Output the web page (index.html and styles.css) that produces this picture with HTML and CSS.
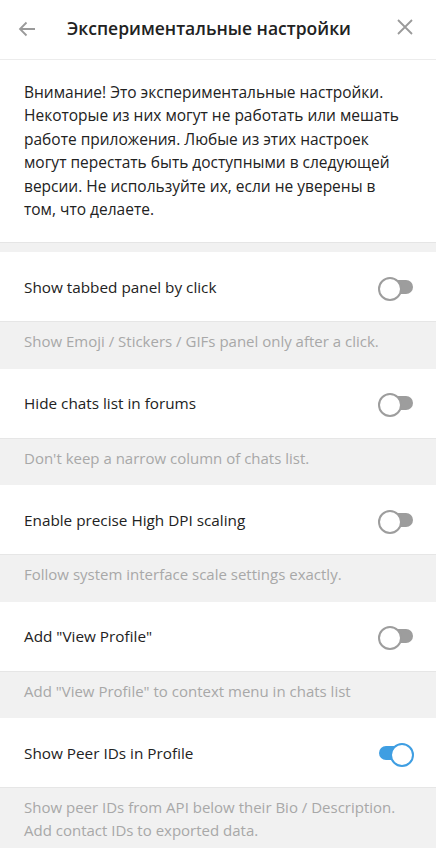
FILE: index.html
```html
<!DOCTYPE html>
<html lang="ru">
<head>
<meta charset="utf-8">
<link rel="stylesheet" href="styles.css">
</head>
<body>
<div class="app">
  <header class="header">
    <button class="icon-btn back" aria-label="Назад">
      <svg width="22" height="22" viewBox="0 0 22 22"><path d="M19 11H4M10.5 4.5L4 11l6.5 6.5" fill="none" stroke="#9a9a9a" stroke-width="1.8"/></svg>
    </button>
    <h1 class="title">Экспериментальные настройки</h1>
    <button class="icon-btn close" aria-label="Закрыть">
      <svg width="20" height="20" viewBox="0 0 20 20"><path d="M3 3L17 17M17 3L3 17" fill="none" stroke="#9a9a9a" stroke-width="1.8"/></svg>
    </button>
  </header>
  <div class="warning">Внимание! Это экспериментальные настройки. Некоторые из них могут не работать или мешать работе приложения. Любые из этих настроек могут перестать быть доступными в следующей версии. Не используйте их, если не уверены в том, что делаете.</div>
  <div class="gap"></div>

  <div class="row"><span class="label">Show tabbed panel by click</span><span class="toggle"></span></div>
  <div class="desc">Show Emoji / Stickers / GIFs panel only after a click.</div>

  <div class="row"><span class="label">Hide chats list in forums</span><span class="toggle"></span></div>
  <div class="desc">Don't keep a narrow column of chats list.</div>

  <div class="row"><span class="label">Enable precise High DPI scaling</span><span class="toggle"></span></div>
  <div class="desc">Follow system interface scale settings exactly.</div>

  <div class="row"><span class="label">Add "View Profile"</span><span class="toggle"></span></div>
  <div class="desc">Add "View Profile" to context menu in chats list</div>

  <div class="row"><span class="label">Show Peer IDs in Profile</span><span class="toggle on"></span></div>
  <div class="desc">Show peer IDs from API below their Bio / Description.<br>Add contact IDs to exported data.</div>
</div>
</body>
</html>
```
FILE: styles.css
```css
* { box-sizing: border-box; }
html, body { margin: 0; padding: 0; }
body {
  font-family: "Open Sans", "Noto Sans", sans-serif;
  background: #f1f1f1;
  width: 436px;
  height: 848px;
  overflow: hidden;
}
.app { display: flex; flex-direction: column; }
.header {
  height: 60px;
  background: #fff;
  border-bottom: 1px solid #ececec;
  display: flex;
  align-items: center;
  padding: 0 21px 0 16px;
}
.icon-btn {
  border: 0;
  background: none;
  padding: 0;
  display: flex;
  align-items: center;
  justify-content: center;
}
.back { width: 22px; height: 22px; margin-top: -2px; }
.title {
  margin: -3px 0 0 29px;
  font-size: 17.5px;
  font-weight: 600;
  color: #222;
  flex: 1;
}
.close { width: 20px; height: 20px; margin-top: -5px; }
.warning {
  background: #fff;
  padding: 21px 29px 21px 24px;
  font-size: 15.5px;
  line-height: 23.4px;
  color: #222;
}
.gap {
  height: 10px;
  background: #f1f1f1;
  border-top: 1px solid #e5e5e5;
}
.row {
  height: 70px;
  background: #fff;
  display: flex;
  align-items: center;
  justify-content: space-between;
  padding: 0 23px 0 24px;
  border-bottom: 1px solid #e6e6e6;
}
.label { font-size: 15.3px; color: #222; }
.desc {
  min-height: 46.5px;
  padding: 8px 24px 9px;
  font-size: 15px;
  line-height: 23px;
  color: #a8a8a8;
  background: #f1f1f1;
}
.toggle {
  position: relative;
  width: 34px;
  height: 14px;
  border-radius: 7px;
  background: #9d9d9d;
}
.toggle::before {
  content: "";
  position: absolute;
  left: -1px;
  top: -3px;
  width: 20px;
  height: 20px;
  border-radius: 50%;
  background: #fff;
  border: 2px solid #9d9d9d;
}
.toggle.on { background: #3f9ee2; }
.toggle.on::before { left: auto; right: -1px; border-color: #3f9ee2; }
```
